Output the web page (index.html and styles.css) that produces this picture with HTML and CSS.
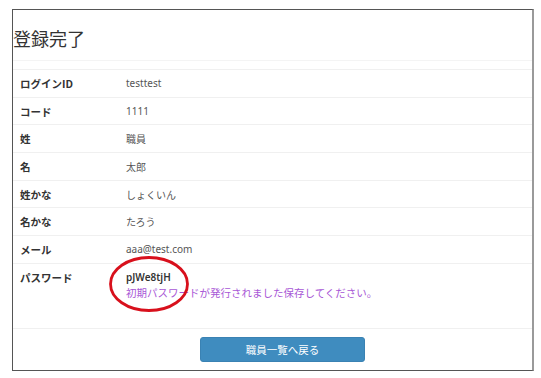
FILE: index.html
```html
<!DOCTYPE html>
<html lang="ja">
<head>
    <meta charset="UTF-8">
    <title>登録完了</title>
    <link rel="stylesheet" href="styles.css">
</head>
<body>
    <div class="frame">
        <div class="page-header">
            <h1>登録完了</h1>
        </div>

        <div class="details">
            <div class="row"><div class="label">ログインID</div><div class="value">testtest</div></div>
            <div class="row"><div class="label">コード</div><div class="value">1111</div></div>
            <div class="row"><div class="label">姓</div><div class="value">職員</div></div>
            <div class="row"><div class="label">名</div><div class="value">太郎</div></div>
            <div class="row"><div class="label">姓かな</div><div class="value">しょくいん</div></div>
            <div class="row"><div class="label">名かな</div><div class="value">たろう</div></div>
            <div class="row"><div class="label">メール</div><div class="value">aaa@test.com</div></div>
            <div class="row row-password">
                <div class="label">パスワード</div>
                <div class="value">
                    <div class="password">pJWe8tjH</div>
                    <div class="notice">初期パスワードが発行されました保存してください。</div>
                </div>
            </div>
        </div>

        <div class="actions">
            <button class="button">職員一覧へ戻る</button>
        </div>

        <!-- red annotation circle -->
        <svg class="mark" width="84" height="60" viewBox="0 0 84 60">
            <ellipse cx="41" cy="29" rx="38.5" ry="26.5" fill="none" stroke="#d8101c" stroke-width="2.8"/>
        </svg>
    </div>
</body>
</html>
```

FILE: styles.css
```css
body {
    margin: 0;
    padding: 0;
    background-color: #fff;
    font-family: "Noto Sans", "Noto Sans CJK JP", sans-serif;
    color: #333;
}
.frame {
    position: relative;
    box-sizing: border-box;
    margin: 9px 0 0 12px;
    width: 522px;
    height: 362px;
    border: 1px solid #555;
    border-right: 2px solid #9a9a9a;
}
.page-header {
    height: 51px;
    border-bottom: 1px solid #f4f4f4;
    box-sizing: border-box;
}
.page-header h1 {
    margin: 0;
    padding: 16px 0 0 0;
    font-size: 18px;
    font-weight: normal;
    line-height: 24px;
    color: #333;
    font-family: "Noto Sans CJK JP", sans-serif;
}
.details {
    margin-top: 8px;
    border-top: 1px solid #f0f0f0;
}
.row {
    display: flex;
    align-items: center;
    height: 27.7px;
    box-sizing: border-box;
    border-bottom: 1px solid #f0f0f0;
    font-size: 10px;
}
.label {
    width: 106px;
    padding-left: 7px;
    font-weight: bold;
    font-size: 10.5px;
    color: #333;
    font-family: "Noto Sans CJK JP", sans-serif;
}
.value {
    color: #555;
}
.row-password {
    height: 65px;
    align-items: flex-start;
    padding-top: 6px;
}
.password {
    font-weight: 600;
    color: #333;
    line-height: 15px;
}
.notice {
    color: #a857d6;
    line-height: 15px;
    font-size: 10.5px;
    font-family: "Noto Sans CJK JP", sans-serif;
}
.actions {
    padding: 8px 0 0 187px;
}
.button {
    width: 165px;
    height: 25px;
    background-color: #3f8cbf;
    color: #fff;
    border: 1px solid #3a82b3;
    border-radius: 3px;
    font-size: 10.5px;
    font-family: "Noto Sans CJK JP", sans-serif;
    cursor: pointer;
}
.mark {
    position: absolute;
    left: 95px;
    top: 245px;
}
```
